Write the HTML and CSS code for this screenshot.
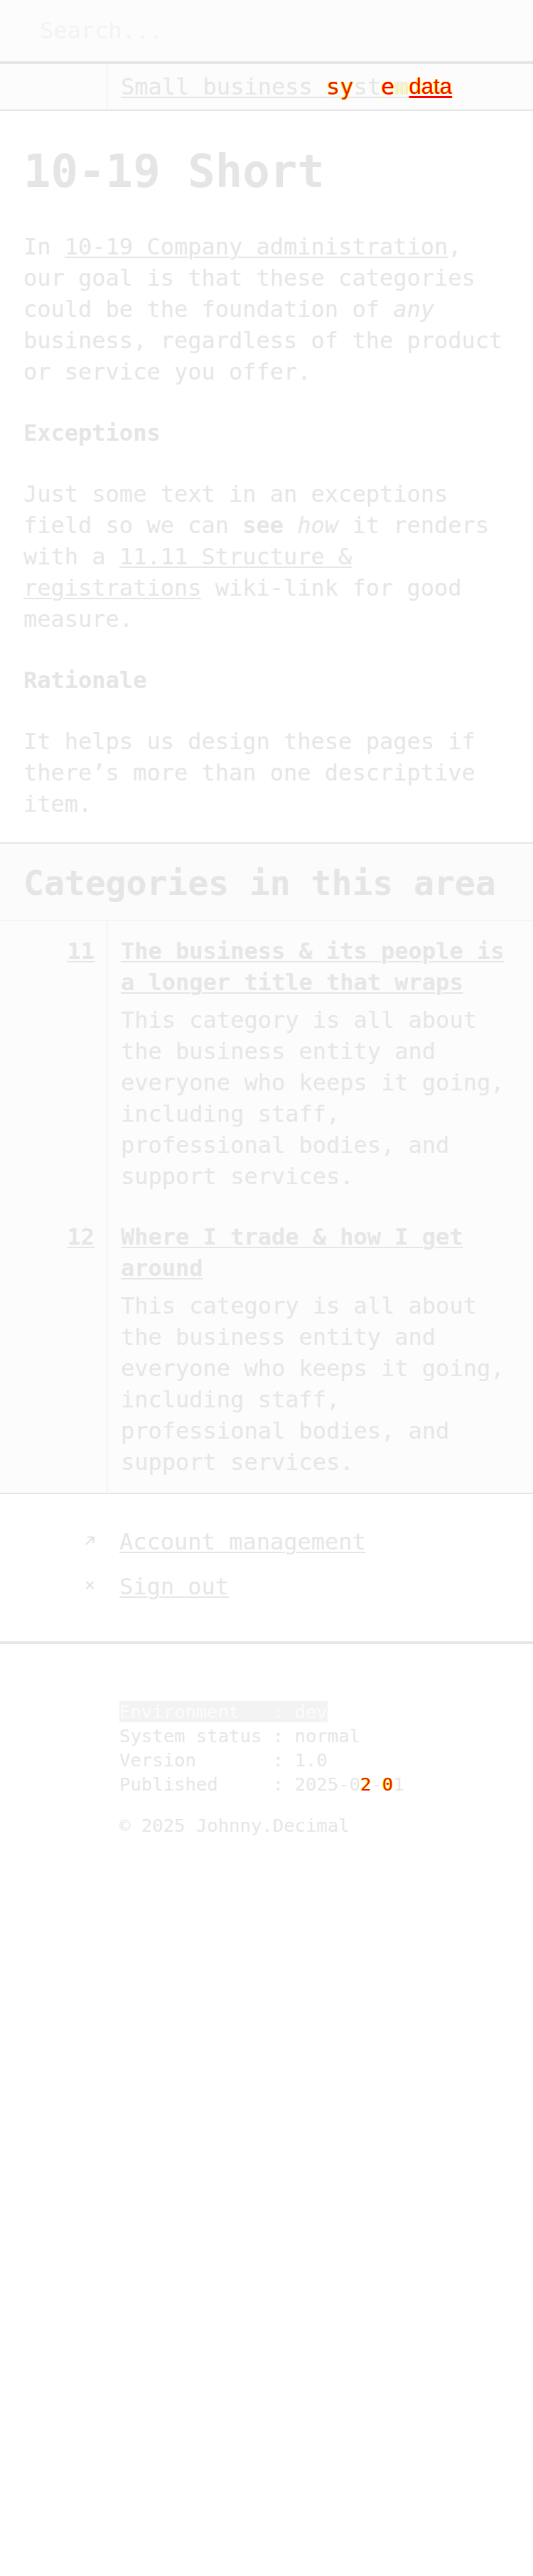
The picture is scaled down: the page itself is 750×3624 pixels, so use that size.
FILE: index.html
```html
<!DOCTYPE html>
<html lang="en">
<head>
<meta charset="utf-8">
<title>10-19 Short</title>
<link rel="stylesheet" href="styles.css">
</head>
<body>
<header class="search">
  <span class="search-ph">Search...</span>
</header>
<nav class="crumbs">
  <div class="crumb-side"></div>
  <div class="crumb-main">
    <a class="crumb-link" href="#">Small business <span class="glitch">s</span><span class="glitch">y</span>st<span class="red">e</span><span class="hl">m</span></a><a class="meta" href="#">data</a>
  </div>
</nav>
<main class="content">
  <h1>10-19 Short</h1>
  <p>In <a href="#">10-19 Company administration</a>, our goal is that these categories could be the foundation of <em>any</em> business, regardless of the product or service you offer.</p>
  <h3>Exceptions</h3>
  <p>Just some text in an exceptions field so we can <strong>see</strong> <em>how</em> it renders with a <a href="#">11.11 Structure &amp; registrations</a> wiki-link for good measure.</p>
  <h3>Rationale</h3>
  <p>It helps us design these pages if there’s more than one descriptive item.</p>
</main>
<section class="cats">
  <div class="cats-head">
    <h2>Categories in this area</h2>
  </div>
  <div class="cat-list">
    <div class="cat-num"><a href="#">11</a></div>
    <div class="cat-body">
      <a class="cat-title" href="#">The business &amp; its people is a longer title that wraps</a>
      <p class="cat-desc">This category is all about the business entity and everyone who keeps it going, including staff, professional bodies, and support services.</p>
    </div>
    <div class="cat-num"><a href="#">12</a></div>
    <div class="cat-body">
      <a class="cat-title" href="#">Where I trade &amp; how I get around</a>
      <p class="cat-desc">This category is all about the business entity and everyone who keeps it going, including staff, professional bodies, and support services.</p>
    </div>
  </div>
</section>
<section class="links">
  <div class="link-row">
    <span class="link-icon"><svg width="15" height="15" viewBox="0 0 15 15"><path d="M2 13 L12.5 2.5 M4 2.5 H12.5 V11" fill="none" stroke="#e3e3e3" stroke-width="2.2"/></svg></span>
    <a href="#">Account management</a>
  </div>
  <div class="link-row">
    <span class="link-icon"><svg width="15" height="12" viewBox="0 0 15 12"><path d="M2.5 1 L12.5 11 M12.5 1 L2.5 11" fill="none" stroke="#e3e3e3" stroke-width="2.2"/></svg></span>
    <a href="#">Sign out</a>
  </div>
</section>
<footer class="foot">
  <div class="meta-rows">
    <div class="row"><span class="env">Environment   : dev</span></div>
    <div class="row">System status : normal</div>
    <div class="row">Version       : 1.0</div>
    <div class="row">Published     : 2025-0<span class="glitch">2</span>-<span class="glitch">0</span>1</div>
  </div>
  <div class="copy">© 2025 Johnny.Decimal</div>
</footer>
</body>
</html>
```
FILE: styles.css
```css
html, body {
  margin: 0;
  padding: 0;
  background: #ffffff;
}
body {
  font-family: "DejaVu Sans Mono", "Liberation Mono", monospace;
  font-size: 32px;
  line-height: 44px;
  color: #e6e6e6;
}
a {
  color: #e6e6e6;
  text-decoration: underline;
  text-decoration-thickness: 2px;
  text-underline-offset: 3px;
  text-decoration-color: #e6e6e6;
}
em { font-style: italic; }
strong { font-weight: bold; }

/* search */
.search {
  height: 90px;
  box-sizing: border-box;
  background: #fcfcfc;
  border-bottom: 4px solid #e6e6e6;
  display: flex;
  align-items: center;
  padding-left: 56px;
}
.search-ph {
  color: #f3f3f3;
}

/* breadcrumbs */
.crumbs {
  display: grid;
  grid-template-columns: 152px 1fr;
  height: 66px;
  box-sizing: border-box;
  background: #fcfcfc;
  border-bottom: 2px solid #e6e6e6;
}
.crumb-side {
  border-right: 2px solid #f5f5f5;
}
.crumb-main {
  padding-left: 18px;
  display: flex;
  align-items: center;
}
.crumb-link { color: #e6e6e6; }
.glitch {
  color: #e8200c;
  text-shadow: 1px 0 0 #fff200, -1px 0 0 #fff200;
}
.red {
  color: #ff0000;
  text-shadow: 1px 0 0 #fff200, -1px 0 0 #fff200;
}
.hl {
  color: #eeeeee;
  text-shadow: 1px 0 0 #fff27a, -1px 0 0 #fff27a;
}
.meta {
  font-family: "Liberation Sans", Arial, sans-serif;
  font-size: 31px;
  color: #ff0000;
  text-decoration-color: #ff0000;
  text-decoration-thickness: 3px;
  text-shadow: 1px 0 0 #fff200, -1px 0 0 #fff200;
  margin-left: 1px;
}

/* main content */
.content {
  padding: 45px 33px 32px;
  border-bottom: 2px solid #e6e6e6;
}
.content h1 {
  font-size: 64px;
  line-height: 80px;
  font-weight: bold;
  margin: 0 0 44px;
  color: #e5e5e5;
}
.content h3 {
  font-size: 32px;
  line-height: 44px;
  font-weight: bold;
  margin: 42px 0;
  color: #e5e5e5;
}
.content p {
  margin: 0;
}

/* categories */
.cats {
  background: #fcfcfc;
  border-bottom: 2px solid #e6e6e6;
}
.cats-head {
  background: #fbfbfb;
  padding: 25px 33px 22px;
  border-bottom: 2px solid #f5f5f5;
}
.cats-head h2 {
  margin: 0;
  font-size: 48px;
  line-height: 60px;
  font-weight: bold;
  color: #e5e5e5;
}
.cat-list {
  display: grid;
  grid-template-columns: 152px 1fr;
}
.cat-num {
  border-right: 2px solid #f5f5f5;
  text-align: right;
  padding: 20px 17px 21px 0;
  font-weight: bold;
}
.cat-body {
  padding: 20px 33px 21px 18px;
}
.cat-title {
  display: block;
  font-weight: bold;
}
.cat-desc {
  margin: 9px 0 0;
}

/* links */
.links {
  padding: 45px 0 55px;
  border-bottom: 4px solid #e6e6e6;
  display: flex;
  flex-direction: column;
  gap: 19px;
}
.link-row {
  display: flex;
  align-items: center;
}
.link-icon {
  width: 152px;
  box-sizing: border-box;
  padding-right: 18px;
  display: flex;
  justify-content: flex-end;
  align-items: center;
  margin-top: -4px;
}
.link-row a {
  margin-left: 16px;
}

/* footer */
.foot {
  padding: 78px 0 0 168px;
  font-size: 25.6px;
  line-height: 34px;
}
.meta-rows .row {
  white-space: pre;
}
.env {
  background: #f3f3f3;
  color: #fcfcfc;
}
.copy {
  margin-top: 24px;
}
```
